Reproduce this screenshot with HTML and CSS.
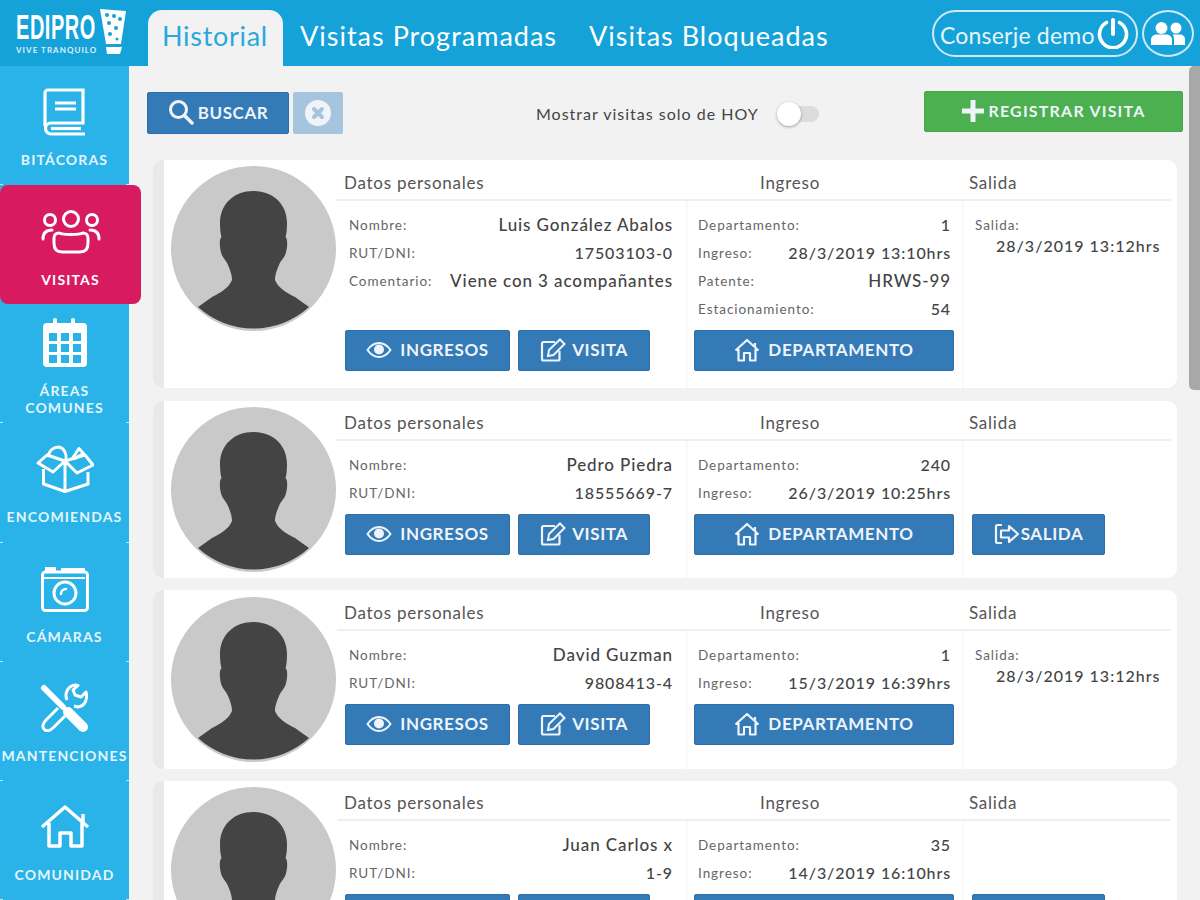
FILE: index.html
```html
<!DOCTYPE html>
<html lang="es">
<head>
    <meta charset="UTF-8">
    <meta name="viewport" content="width=device-width, initial-scale=1.0">
    <title>Edipro - Visitas</title>
    <link rel="stylesheet" href="styles.css">
</head>
<body>

    <!-- iconos repetidos -->
    <svg class="sprite" xmlns="http://www.w3.org/2000/svg">
        <symbol id="i-avatar" viewBox="0 0 165 165">
            <circle cx="82.5" cy="82.5" r="82.5" fill="#c9c9c9"/>
            <path fill="#444" d="M82.5 25C102 25 116 38 116 57C116 63 115.5 68 114.5 71C117 73 116.5 82 114.5 88C113 92 110 94 108 99C105 106 104 110 104 114C107 122 116 127 124 131L138 141A82.5 82.5 0 0 1 27 141L41 131C49 127 58 122 61 114C61 110 60 106 57 99C55 94 52 92 50.5 88C48.500 82 48 73 50.500 71C49.500 68 49 63 49 57C49 38 63 25 82.500 25Z"/>
        </symbol>
        <symbol id="i-eye" viewBox="0 0 26 18">
            <path fill="none" stroke="currentColor" stroke-width="2" d="M1.500 9C5 4 9 2 13 2S21 4 24.500 9C21 14 17 16 13 16S5 14 1.500 9Z"/>
            <circle cx="13" cy="8.500" r="5" fill="currentColor"/>
        </symbol>
        <symbol id="i-edit" viewBox="0 0 26 24">
            <path fill="none" stroke="currentColor" stroke-width="2.200" d="M15 4H3.500A1.500 1.500 0 0 0 2 5.500V21A1.500 1.500 0 0 0 3.500 22.500H18A1.500 1.500 0 0 0 19.500 21V13"/>
            <path fill="none" stroke="currentColor" stroke-width="2" d="M9 12L20 1.500L24.500 6L13.500 17L8 18Z"/>
        </symbol>
        <symbol id="i-home" viewBox="0 0 26 24">
            <path fill="none" stroke="currentColor" stroke-width="2.200" stroke-linejoin="round" d="M1.500 12.500L13 2L24.500 12.500M21 5V9M4.500 11V22.500H10V15H16V22.500H21.500V11"/>
        </symbol>
        <symbol id="i-exit" viewBox="0 0 26 22">
            <path fill="none" stroke="currentColor" stroke-width="2.200" d="M8 2H3.500A1.500 1.500 0 0 0 2 3.500V18.500A1.500 1.500 0 0 0 3.500 20H8"/>
            <path fill="none" stroke="currentColor" stroke-width="2.200" stroke-linejoin="round" d="M7 7.500H15V3L24 11L15 19V14.500H7Z"/>
        </symbol>
    </svg>

    <div class="app">
        <header class="topbar">
            <div class="logo">
                <div class="logo-text">
                    <span class="logo-name">EDIPRO</span>
                    <span class="logo-sub">VIVE TRANQUILO</span>
                </div>
                <svg class="logo-glass" viewBox="0 0 26 46">
                    <path fill="#fff" d="M0 1L26 3L21 36H6Z"/>
                    <g fill="#14a2d8">
                        <circle cx="7" cy="7" r="2"/><circle cx="14" cy="8" r="2"/><circle cx="20" cy="11" r="2"/>
                        <circle cx="9" cy="15" r="2"/><circle cx="16" cy="20" r="2"/><circle cx="10" cy="26" r="2"/><circle cx="17" cy="31" r="1.500"/>
                    </g>
                    <path fill="#fff" d="M6 39H22L20 46H7Z"/>
                </svg>
            </div>
            <nav class="tabs">
                <a class="tab tab-active">Historial</a>
                <a class="tab">Visitas Programadas</a>
                <a class="tab">Visitas Bloqueadas</a>
            </nav>
            <div class="user-box">
                <div class="user-pill">
                    <span class="user-name">Conserje demo</span>
                    <svg class="power-icon" viewBox="0 0 32 32">
                        <path fill="none" stroke="#fff" stroke-width="3.600" stroke-linecap="round" d="M9.500 5.500A13.500 13.500 0 1 0 22.500 5.500"/>
                        <path fill="none" stroke="#fff" stroke-width="4" stroke-linecap="round" d="M16 3V17"/>
                    </svg>
                </div>
                <div class="user-circle">
                    <svg class="users-icon" viewBox="0 0 34 24" fill="#fff">
                        <circle cx="10.500" cy="7" r="6"/><circle cx="25" cy="7" r="5.500"/>
                        <path d="M0 24V19C0 15 3 13.500 6 13.500H15C18 13.500 21 15 21 19V24Z"/>
                        <path d="M23 24V18C23 16 22.500 14.500 21.500 13.500H29C32 13.500 34 15.500 34 18.500V24Z"/>
                    </svg>
                </div>
            </div>
        </header>

        <aside class="sidebar">
            <a class="nav-item">
                <span class="nav-icon">
                    <svg width="43" height="48" viewBox="0 0 43 48" fill="none" stroke="#fff" stroke-width="3.200">
                        <path d="M2 38V5A3 3 0 0 1 5 2H40V35H8A5.500 5.500 0 0 0 8 46H42"/>
                        <path d="M38 40.500H8"/>
                        <path stroke-width="2.800" d="M12 15H33M12 21H33"/>
                    </svg>
                </span>
                <span class="nav-label">BITÁCORAS</span>
            </a>
            <a class="nav-item nav-item-active">
                <span class="nav-icon">
                    <svg width="60" height="44" viewBox="0 0 60 44" fill="none" stroke="#fff" stroke-width="3">
                        <circle cx="9" cy="10" r="5.500"/><circle cx="30" cy="9" r="7.500"/><circle cx="51" cy="10" r="5.500"/>
                        <path stroke-linecap="round" d="M2 29C2 23 5 20 11 20M58 29C58 23 55 20 49 20"/>
                        <path d="M13 33V28C13 25 15 23 18 23C22 25 38 25 42 23C45 23 47 25 47 28V33C47 39 44 42 39 42H21C16 42 13 39 13 33Z"/>
                    </svg>
                </span>
                <span class="nav-label">VISITAS</span>
            </a>
            <a class="nav-item nav-item-double">
                <span class="nav-icon">
                    <svg width="44" height="49" viewBox="0 0 44 49">
                        <rect y="5" width="44" height="44" rx="4" fill="#fff"/>
                        <rect x="10" width="4" height="10" rx="2" fill="#fff"/><rect x="28" width="4" height="10" rx="2" fill="#fff"/>
                        <g fill="#29b3e8">
                            <rect x="6" y="15" width="8" height="8"/><rect x="18" y="15" width="8" height="8"/><rect x="30" y="15" width="8" height="8"/>
                            <rect x="6" y="26" width="8" height="8"/><rect x="18" y="26" width="8" height="8"/><rect x="30" y="26" width="8" height="8"/>
                            <rect x="6" y="37" width="8" height="8"/><rect x="18" y="37" width="8" height="8"/><rect x="30" y="37" width="8" height="8"/>
                        </g>
                    </svg>
                </span>
                <span class="nav-label">ÁREAS<br>COMUNES</span>
            </a>
            <a class="nav-item">
                <span class="nav-icon">
                    <svg width="58" height="48" viewBox="0 0 58 48" fill="none" stroke="#fff" stroke-width="3" stroke-linejoin="round">
                        <path d="M29 16L49 10L57 20L41 28L29 16L17 27L2 18L11 10L29 16V46M7.500 24V39L29 46.500L52 39V27"/>
                        <path d="M12 12C13 5 18 2 23 2C28 3 31 9 30 15"/>
                        <path d="M36 14L43 3.500L47.500 8.500L38 14"/>
                    </svg>
                </span>
                <span class="nav-label">ENCOMIENDAS</span>
            </a>
            <a class="nav-item">
                <span class="nav-icon">
                    <svg width="48" height="46" viewBox="0 0 48 46" fill="none" stroke="#fff" stroke-width="3">
                        <rect x="1.500" y="6" width="45" height="38.500" rx="3"/>
                        <path d="M4 3H15M20 4H44" stroke-width="4"/>
                        <path d="M2 12H44" stroke-width="2"/>
                        <circle cx="24" cy="27" r="11"/>
                        <path stroke-width="2.500" stroke-linecap="round" d="M20 28C20 25 22 23 25 23"/>
                    </svg>
                </span>
                <span class="nav-label">CÁMARAS</span>
            </a>
            <a class="nav-item">
                <span class="nav-icon">
                    <svg width="49" height="49" viewBox="0 0 49 49" fill="none" stroke="#fff">
                        <path stroke-width="6" stroke-linecap="round" d="M4 5L23 24"/>
                        <path stroke-width="10" stroke-linecap="round" d="M28 29L43 44"/>
                        <path stroke-width="3" stroke-linejoin="round" d="M18 25L6 37C2 41 2 45 5 47C8 49 11 47 14 44L25 33"/>
                        <path stroke-width="3" stroke-linejoin="round" d="M27 17C24 10 28 3 35 2L38 2.500L33 7L35 12L41 14L46 9C48 16 45 23 38 24C37 24 36 23.500 34 23"/>
                    </svg>
                </span>
                <span class="nav-label">MANTENCIONES</span>
            </a>
            <a class="nav-item">
                <span class="nav-icon">
                    <svg width="50" height="44" viewBox="0 0 50 44" fill="none" stroke="#fff" stroke-width="3.500" stroke-linejoin="round">
                        <path d="M2 22L25 2L48 22M43 9V17M9 18V41H20V28H31V41H42V18"/>
                    </svg>
                </span>
                <span class="nav-label">COMUNIDAD</span>
            </a>
        </aside>

        <main class="content">
            <div class="toolbar">
                <div class="search-group">
                    <button class="btn btn-search">
                        <svg class="btn-icon-search" viewBox="0 0 26 26" fill="none" stroke="currentColor">
                            <circle cx="10.500" cy="10.500" r="8" stroke-width="3"/>
                            <path stroke-width="3.500" stroke-linecap="round" d="M17 17L24 24"/>
                        </svg>
                        BUSCAR
                    </button>
                    <button class="btn-clear">
                        <svg viewBox="0 0 26 26" width="26" height="26">
                            <circle cx="13" cy="13" r="13" fill="#f0f4f8"/>
                            <path stroke="#a6c4de" stroke-width="4" stroke-linecap="round" d="M9 9L17 17M17 9L9 17"/>
                        </svg>
                    </button>
                </div>
                <div class="today-filter">
                    <span>Mostrar visitas solo de HOY</span>
                    <span class="toggle"><span class="toggle-knob"></span></span>
                </div>
                <button class="btn btn-green">
                    <svg class="btn-icon-plus" viewBox="0 0 24 24" fill="currentColor"><path d="M9.500 1H14.500V9.500H23V14.500H14.500V23H9.500V14.500H1V9.500H9.500Z"/></svg>
                    REGISTRAR VISITA
                </button>
            </div>

            <section class="card">
                <div class="card-photo"><svg class="avatar"><use href="#i-avatar"/></svg></div>
                <div class="card-main">
                    <div class="card-head">
                        <div class="head-personal">Datos personales</div>
                        <div class="head-ingreso">Ingreso</div>
                        <div class="head-salida">Salida</div>
                    </div>
                    <div class="card-body">
                        <div class="col col-personal">
                            <div class="rows">
                                <div class="row"><span class="lbl">Nombre:</span><span class="val val-text">Luis González Abalos</span></div>
                                <div class="row"><span class="lbl">RUT/DNI:</span><span class="val">17503103-0</span></div>
                                <div class="row"><span class="lbl">Comentario:</span><span class="val val-text">Viene con 3 acompañantes</span></div>
                            </div>
                            <div class="actions">
                                <button class="btn btn-ingresos"><svg class="ico-eye"><use href="#i-eye"/></svg>INGRESOS</button>
                                <button class="btn btn-visita"><svg class="ico"><use href="#i-edit"/></svg>VISITA</button>
                            </div>
                        </div>
                        <div class="col col-ingreso">
                            <div class="rows">
                                <div class="row"><span class="lbl">Departamento:</span><span class="val">1</span></div>
                                <div class="row"><span class="lbl">Ingreso:</span><span class="val">28/3/2019 13:10hrs</span></div>
                                <div class="row"><span class="lbl">Patente:</span><span class="val val-text">HRWS-99</span></div>
                                <div class="row"><span class="lbl">Estacionamiento:</span><span class="val">54</span></div>
                            </div>
                            <div class="actions">
                                <button class="btn btn-depto"><svg class="ico"><use href="#i-home"/></svg>DEPARTAMENTO</button>
                            </div>
                        </div>
                        <div class="col col-salida">
                            <div class="salida-info">
                                <span class="lbl">Salida:</span>
                                <span class="val salida-val">28/3/2019 13:12hrs</span>
                            </div>
                        </div>
                    </div>
                </div>
            </section>

            <section class="card card-snug">
                <div class="card-photo"><svg class="avatar"><use href="#i-avatar"/></svg></div>
                <div class="card-main">
                    <div class="card-head">
                        <div class="head-personal">Datos personales</div>
                        <div class="head-ingreso">Ingreso</div>
                        <div class="head-salida">Salida</div>
                    </div>
                    <div class="card-body">
                        <div class="col col-personal">
                            <div class="rows">
                                <div class="row"><span class="lbl">Nombre:</span><span class="val val-text">Pedro Piedra</span></div>
                                <div class="row"><span class="lbl">RUT/DNI:</span><span class="val">18555669-7</span></div>
                            </div>
                            <div class="actions">
                                <button class="btn btn-ingresos"><svg class="ico-eye"><use href="#i-eye"/></svg>INGRESOS</button>
                                <button class="btn btn-visita"><svg class="ico"><use href="#i-edit"/></svg>VISITA</button>
                            </div>
                        </div>
                        <div class="col col-ingreso">
                            <div class="rows">
                                <div class="row"><span class="lbl">Departamento:</span><span class="val">240</span></div>
                                <div class="row"><span class="lbl">Ingreso:</span><span class="val">26/3/2019 10:25hrs</span></div>
                            </div>
                            <div class="actions">
                                <button class="btn btn-depto"><svg class="ico"><use href="#i-home"/></svg>DEPARTAMENTO</button>
                            </div>
                        </div>
                        <div class="col col-salida">
                            <div class="rows"></div>
                            <div class="actions">
                                <button class="btn btn-salida"><svg class="ico-exit"><use href="#i-exit"/></svg>SALIDA</button>
                            </div>
                        </div>
                    </div>
                </div>
            </section>

            <section class="card card-tall">
                <div class="card-photo"><svg class="avatar"><use href="#i-avatar"/></svg></div>
                <div class="card-main">
                    <div class="card-head">
                        <div class="head-personal">Datos personales</div>
                        <div class="head-ingreso">Ingreso</div>
                        <div class="head-salida">Salida</div>
                    </div>
                    <div class="card-body">
                        <div class="col col-personal">
                            <div class="rows">
                                <div class="row"><span class="lbl">Nombre:</span><span class="val val-text">David Guzman</span></div>
                                <div class="row"><span class="lbl">RUT/DNI:</span><span class="val">9808413-4</span></div>
                            </div>
                            <div class="actions">
                                <button class="btn btn-ingresos"><svg class="ico-eye"><use href="#i-eye"/></svg>INGRESOS</button>
                                <button class="btn btn-visita"><svg class="ico"><use href="#i-edit"/></svg>VISITA</button>
                            </div>
                        </div>
                        <div class="col col-ingreso">
                            <div class="rows">
                                <div class="row"><span class="lbl">Departamento:</span><span class="val">1</span></div>
                                <div class="row"><span class="lbl">Ingreso:</span><span class="val">15/3/2019 16:39hrs</span></div>
                            </div>
                            <div class="actions">
                                <button class="btn btn-depto"><svg class="ico"><use href="#i-home"/></svg>DEPARTAMENTO</button>
                            </div>
                        </div>
                        <div class="col col-salida">
                            <div class="salida-info">
                                <span class="lbl">Salida:</span>
                                <span class="val salida-val">28/3/2019 13:12hrs</span>
                            </div>
                        </div>
                    </div>
                </div>
            </section>

            <section class="card card-snug">
                <div class="card-photo"><svg class="avatar"><use href="#i-avatar"/></svg></div>
                <div class="card-main">
                    <div class="card-head">
                        <div class="head-personal">Datos personales</div>
                        <div class="head-ingreso">Ingreso</div>
                        <div class="head-salida">Salida</div>
                    </div>
                    <div class="card-body">
                        <div class="col col-personal">
                            <div class="rows">
                                <div class="row"><span class="lbl">Nombre:</span><span class="val val-text">Juan Carlos x</span></div>
                                <div class="row"><span class="lbl">RUT/DNI:</span><span class="val">1-9</span></div>
                            </div>
                            <div class="actions">
                                <button class="btn btn-ingresos"><svg class="ico-eye"><use href="#i-eye"/></svg>INGRESOS</button>
                                <button class="btn btn-visita"><svg class="ico"><use href="#i-edit"/></svg>VISITA</button>
                            </div>
                        </div>
                        <div class="col col-ingreso">
                            <div class="rows">
                                <div class="row"><span class="lbl">Departamento:</span><span class="val">35</span></div>
                                <div class="row"><span class="lbl">Ingreso:</span><span class="val">14/3/2019 16:10hrs</span></div>
                            </div>
                            <div class="actions">
                                <button class="btn btn-depto"><svg class="ico"><use href="#i-home"/></svg>DEPARTAMENTO</button>
                            </div>
                        </div>
                        <div class="col col-salida">
                            <div class="rows"></div>
                            <div class="actions">
                                <button class="btn btn-salida"><svg class="ico-exit"><use href="#i-exit"/></svg>SALIDA</button>
                            </div>
                        </div>
                    </div>
                </div>
            </section>

            <div class="scroll-thumb"></div>
        </main>
    </div>

</body>
</html>
```

FILE: styles.css
```css
* {
    box-sizing: border-box;
}
html, body {
    margin: 0;
    height: 100%;
    overflow: hidden;
}
body {
    font-family: Lato, "Open Sans", sans-serif;
    background-color: #f2f2f2;
    color: #444;
}
.sprite {
    display: none;
}
.app {
    display: grid;
    grid-template-columns: 129px 1fr;
    grid-template-rows: 66px 834px;
    height: 900px;
}

/* barra superior */
.topbar {
    grid-column: 1 / 3;
    display: flex;
    align-items: flex-end;
    background-color: #14a2d8;
    position: relative;
    z-index: 2;
}
.logo {
    width: 148px;
    height: 66px;
    display: flex;
    padding: 8px 0 0 16px;
    gap: 3px;
}
.logo-text {
    display: flex;
    flex-direction: column;
    width: 81px;
    color: #fff;
}
.logo-name {
    font-family: "Liberation Sans", sans-serif;
    font-weight: bold;
    font-size: 35px;
    line-height: 37px;
    letter-spacing: 1px;
    transform: scaleX(0.57);
    transform-origin: left center;
    white-space: nowrap;
}
.logo-sub {
    font-size: 8px;
    line-height: 10px;
    font-weight: bold;
    letter-spacing: 1.05px;
    white-space: nowrap;
    opacity: 0.85;
}
.logo-glass {
    width: 26px;
    height: 46px;
}
.tabs {
    display: flex;
    height: 56px;
}
.tab {
    color: #fff;
    font-size: 27px;
    line-height: 52px;
    letter-spacing: 1px;
    padding: 0 16px;
    white-space: nowrap;
}
.tab-active {
    width: 135px;
    background-color: #f2f2f2;
    color: #29a8dc;
    border-radius: 14px 14px 0 0;
    padding: 0 14px;
    letter-spacing: 0.7px;
    margin-right: 1px;
}
.user-box {
    margin-left: auto;
    display: flex;
    gap: 4px;
    align-self: center;
    padding-right: 6px;
}
.user-pill {
    width: 206px;
    height: 47px;
    border: 2px solid #cfeaf6;
    border-radius: 24px;
    display: flex;
    align-items: center;
    justify-content: space-between;
    padding: 0 7px 0 6px;
    color: #e6f5fb;
    font-size: 23px;
    letter-spacing: 0.2px;
    white-space: nowrap;
}
.user-name {
    padding-top: 3px;
}
.power-icon {
    width: 32px;
    height: 32px;
}
.user-circle {
    width: 52px;
    height: 47px;
    border: 2px solid #cfeaf6;
    border-radius: 50%;
    display: flex;
    align-items: center;
    justify-content: center;
}
.users-icon {
    width: 34px;
    height: 24px;
}

/* menu lateral */
.sidebar {
    display: grid;
    grid-template-rows: repeat(7, 1fr);
    background-color: #29b3e8;
    position: relative;
    z-index: 1;
}
.nav-item {
    display: flex;
    flex-direction: column;
    align-items: center;
    padding-top: 22px;
    color: #e4f6fd;
    background: linear-gradient(to right, #bfe8f8 3px, transparent 3px, transparent 126px, #bfe8f8 126px) no-repeat bottom / 100% 1px;
}
.nav-icon {
    height: 48px;
    display: flex;
    align-items: center;
    justify-content: center;
    margin-bottom: 15px;
}
.nav-label {
    font-size: 14px;
    line-height: 17px;
    font-weight: bold;
    letter-spacing: 1.15px;
    text-align: center;
    white-space: nowrap;
}
.nav-item-active {
    background: #d81b60;
    color: #fff;
    margin-right: -12px;
    border-radius: 8px;
    padding-top: 23px;
}
.nav-item-double {
    padding-top: 14px;
}
.nav-item-double .nav-icon {
    margin-bottom: 16px;
}

/* contenido */
.content {
    position: relative;
    overflow: hidden;
    padding: 25px 17px 0 18px;
}
.toolbar {
    display: flex;
    align-items: flex-start;
    height: 42px;
    margin-bottom: 27px;
}
.search-group {
    display: flex;
    gap: 4px;
    margin-top: 1px;
}
.btn {
    display: inline-flex;
    align-items: center;
    justify-content: center;
    height: 41px;
    border: 1px solid #2c6ea8;
    border-radius: 2px;
    background-color: #337ab7;
    color: #eef4fa;
    font-family: inherit;
    font-size: 17px;
    font-weight: bold;
    letter-spacing: 0.6px;
    padding: 0 0 2px;
    white-space: nowrap;
}
.btn-search {
    width: 142px;
    height: 42px;
    gap: 4px;
    font-size: 17px;
}
.btn-icon-search {
    width: 26px;
    height: 26px;
}
.btn-clear {
    width: 50px;
    height: 42px;
    border: 0;
    border-radius: 2px;
    background-color: #a6c4de;
    display: flex;
    align-items: center;
    justify-content: center;
    padding: 0;
}
.today-filter {
    display: flex;
    align-items: center;
    gap: 20px;
    margin: 13px 0 0 193px;
    font-size: 16px;
    line-height: 20px;
    letter-spacing: 1px;
}
.toggle {
    position: relative;
    display: block;
    width: 40px;
    height: 16px;
    border-radius: 8px;
    background-color: #dcdcdc;
}
.toggle-knob {
    position: absolute;
    left: -2px;
    top: -4px;
    width: 24px;
    height: 24px;
    border-radius: 50%;
    background-color: #fff;
    box-shadow: 0 1px 3px rgba(0, 0, 0, 0.35);
}
.btn-green {
    margin-left: auto;
    width: 259px;
    height: 41px;
    gap: 3px;
    background-color: #4caf50;
    border-color: #46a64a;
    font-size: 16px;
    letter-spacing: 1.2px;
}
.btn-icon-plus {
    width: 24px;
    height: 24px;
}
.scroll-thumb {
    position: absolute;
    top: 0;
    right: 0;
    width: 11px;
    height: 324px;
    border-radius: 5px 0 0 5px;
    background-color: #a8a8a8;
}

/* tarjetas */
.card {
    display: flex;
    width: 1024px;
    margin: 0 0 12px 6px;
    min-height: 177px;
    background-color: #fff;
    border-left: 11px solid #e9e9e9;
    border-radius: 10px;
}
.card:first-of-type {
    margin-bottom: 13px;
}
.card-tall {
    min-height: 179px;
}
.card-tall .card-photo {
    padding-top: 7px;
}
.card-photo {
    width: 173px;
    flex-shrink: 0;
    padding: 6px 0 0 7px;
}
.avatar {
    display: block;
    width: 165px;
    height: 165px;
}
.card-main {
    flex: 1;
    display: flex;
    flex-direction: column;
    margin-right: 6px;
}
.card-head {
    display: grid;
    grid-template-columns: 349px 276px 209px;
    height: 41px;
    border-bottom: 2px solid #efefef;
    font-size: 17px;
    line-height: 45px;
    letter-spacing: 0.75px;
    color: #555;
}
.card-snug .card-head {
    height: 40px;
    line-height: 44px;
}
.head-personal {
    padding-left: 7px;
}
.head-ingreso {
    padding-left: 74px;
}
.head-salida {
    padding-left: 7px;
}
.card-body {
    flex: 1;
    display: grid;
    grid-template-columns: 349px 276px 209px;
    grid-template-rows: auto auto 1fr;
}
.col {
    display: grid;
    grid-row: span 3;
    grid-template-rows: subgrid;
}
.col-ingreso, .col-salida {
    border-left: 2px solid #f9f9f9;
}
.rows {
    padding-top: 10px;
    min-height: 10px;
}
.row {
    display: flex;
    justify-content: space-between;
    align-items: center;
    height: 28px;
    white-space: nowrap;
}
.col-personal .rows {
    padding-left: 12px;
    padding-right: 13px;
}
.col-ingreso .rows {
    padding-left: 10px;
    padding-right: 11px;
}
.lbl {
    font-size: 13.5px;
    letter-spacing: 0.95px;
    color: #666;
}
.val {
    font-size: 16px;
    font-weight: 500;
    letter-spacing: 0.9px;
    color: #444;
    margin-bottom: 2px;
}
.val-text {
    font-size: 17px;
}
.salida-info {
    grid-row: 1 / 3;
    display: flex;
    flex-direction: column;
    padding: 16px 0 0 11px;
}
.salida-info .lbl {
    line-height: 16px;
}
.salida-val {
    padding-left: 21px;
    line-height: 26px;
    letter-spacing: 1px;
}
.actions {
    display: flex;
    gap: 8px;
    padding: 7px 0 17px;
}
.col-personal .actions {
    padding-left: 8px;
}
.col-ingreso .actions {
    padding-left: 6px;
}
.col-salida .actions {
    padding-left: 8px;
}
.btn-ingresos {
    width: 165px;
    gap: 8px;
}
.btn-visita {
    width: 132px;
    gap: 6px;
}
.btn-depto {
    width: 260px;
    gap: 8px;
}
.btn-salida {
    width: 133px;
    gap: 1px;
}
.ico {
    width: 26px;
    height: 24px;
}
.ico-eye {
    width: 26px;
    height: 18px;
}
.ico-exit {
    width: 26px;
    height: 22px;
}
```
